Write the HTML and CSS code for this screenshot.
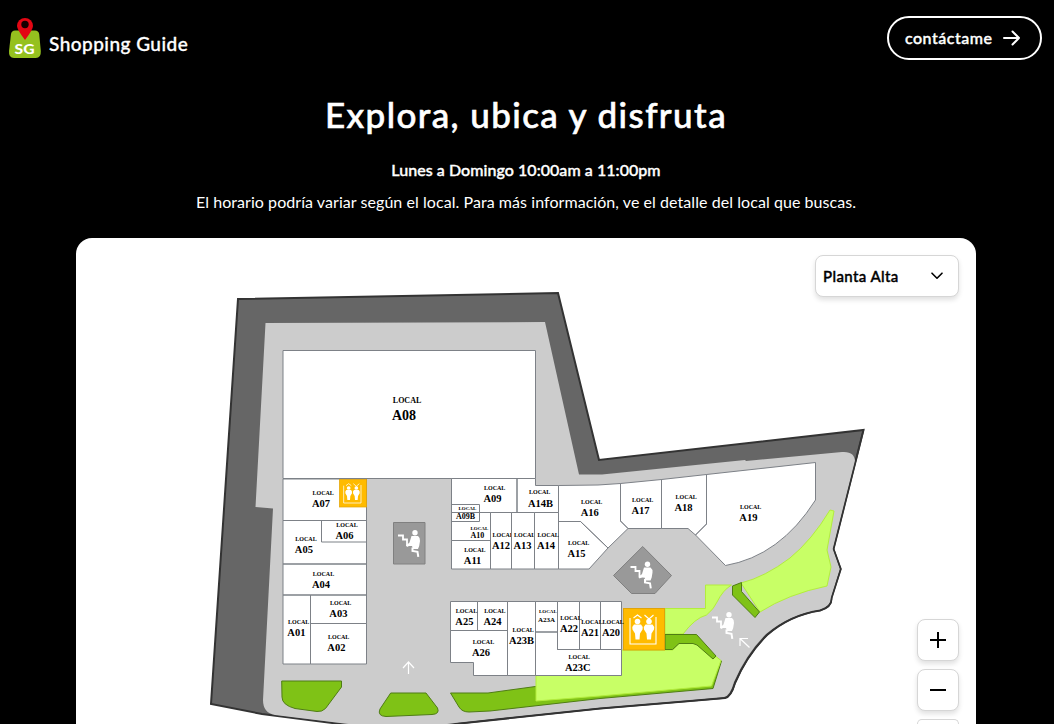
FILE: index.html
```html
<!DOCTYPE html>
<html lang="es">
<head>
<meta charset="utf-8">
<title>Shopping Guide</title>
<link rel="stylesheet" href="styles.css">
</head>
<body>
<header class="header">
  <a class="brand">
    <svg class="logo" width="34" height="42" viewBox="0 0 34 42">
      <path d="M7 13.500h20q3.500 0 4.200 3.500l1.600 17q.4 7-5 7H6q-5.500 0-5-7L3 17q.6-3.500 4-3.500z" fill="#95c11f"/>
      <path fill-rule="evenodd" d="M17 23Q9 12.500 9 9a8 8 0 0 1 16 0Q25 12.500 17 23z" fill="#e30613"/>
      <circle cx="17" cy="7.500" r="3.700" fill="#160000"/>
      <text x="6.500" y="36.500" class="logo-text" textLength="20" lengthAdjust="spacingAndGlyphs">SG</text>
    </svg>
    <span class="brand-name">Shopping Guide</span>
  </a>
  <a class="contact"><span>contáctame</span>
    <svg width="18" height="16" viewBox="0 0 18 16"><path d="M1 8h15M9.500 1.500 16 8l-6.500 6.500" class="icon-line"/></svg>
  </a>
</header>
<main class="main">
  <h1 class="title">Explora, ubica y disfruta</h1>
  <p class="hours">Lunes a Domingo 10:00am a 11:00pm</p>
  <p class="note">El horario podría variar según el local. Para más información, ve el detalle del local que buscas.</p>
  <section class="map-card">
    <svg class="map" width="900" height="486" viewBox="76 238 900 486">
      <defs>
        <g id="escalator">
          <path d="M0 5.500h5v4h4V15h5" fill="none" stroke="#fff" stroke-width="1.800"/>
          <circle cx="17" cy="2.800" r="2.700" fill="#fff"/>
          <path d="M13.500 6h6.500q2.200 1.500 2 5l-.8 5-1.200 3h-5l-1-3-2-.5-3 1.500-.8-1.500 3.300-3z" fill="#fff"/>
          <path d="M14.500 17.500v3.500l5 .8.800 5" fill="none" stroke="#fff" stroke-width="2"/>
        </g>
        <g id="elevator">
          <rect x=".5" y=".5" width="41" height="41.500" fill="#fb0" stroke="#e0a30a"/>
          <path d="M7 10v26h26V9M10.500 10l4-3 4 3M21.500 7l4.500 4 4.500-4" fill="none" stroke="#fff" stroke-width="1.100"/>
          <circle cx="14.500" cy="13.500" r="2.800" fill="#fff"/><circle cx="26" cy="13.500" r="2.800" fill="#fff"/>
          <path d="M11 16.500h7q2 1.500 1.500 5l-2.500 4-.5 6h-4l-.5-6-2.500-4q-.5-3.500 1.500-5zM22.500 16.500h7q2 1.500 1.500 5l-2.500 4-.5 6h-4l-.5-6-2.500-4q-.5-3.500 1.500-5z" fill="#fff"/>
        </g>
      </defs>

      <!-- building outline and walkways -->
      <path class="building" d="M238 299 558 293 599 460 863.500 430 833.500 549 840.700 569 831.500 598Q832 607 820 610.500 790 615 767 635 747 655 735 683 731 697 725 698L690 701 600 708.500 455 724 400 731 340 724 262 714 211 704z"/>
      <path class="floor" d="M265.500 323 545 322 579 474.500 602 474.500 745 460 746 461 842 452Q855 451 855 462L833 549 840 569 831 598Q831 606 820 609.500 790 614 766 634 746 654 734 682 730 696 724 697L690 700 600 707.500 455 723 400 730 340 723 275 715Q263 713 263 700L273 508.500 255.500 507z"/>
      <path class="edge" d="M863.500 430 833.500 549 840.700 569 831.500 598Q832 607 820 610.500 790 615 767 635 747 655 735 683 731 697 725 698L690 701 600 708.500 455 724"/>

      <!-- gardens -->
      <path class="garden" d="M281.700 681H341.500V687L325.500 708.500Q322 712 317 711.500L295 708.500Q282 705 282 697z"/>
      <path class="garden" d="M390.700 693H426L437.500 708Q440 714 432 714.500L386 716.500Q377 716 380 709z"/>
      <path class="garden" d="M450.500 693H488L535.500 686.500 721.500 661 713 688.500 600 698.500 490 711 469 712Q462 712 459 707z"/>
      <path class="lawn" d="M536 675.500H621.500V650H673L679 643.500H696.500L713 659 716 656.500 721 660.500 711.500 686 600 696 536 701z"/>
      <path class="lawn" d="M705.500 585H731.500Q723 590 717 602 714 609 706.500 615 695 618 683 634H665V608.500H705.500z"/>
      <path class="lawn" d="M830 510 834 511 827 550 831 567 827 586Q788 594 760 612L741 583Q765 577 790 558 812 540 830 510z"/>
      <path class="garden" d="M732.500 586 741.500 582.500V591.500L759.500 612 755 617.500 732.500 595z"/>
      <path class="garden" d="M665 634.500H696.500L716 656 713 659 697 645 693 643.500H679L672.500 649.500H665z"/>

      <!-- stores -->
      <g class="stores">
        <path d="M283 350.500H535.500V478.500H283zM283 479H366.500V520.500H283zM283 520.500H366.500V564H283zM321.500 520.500H366.500V542H321.500zM283 564H366.500V595H283zM283 595H310.500V664H283zM310.500 595H366.500V623.500H310.500zM310.500 623.500H366.500V664H310.500z"/>
        <path d="M451.500 478.500H517V512.500H451.500zM517 478.500H535.500V485.500H558.500V512.500H517zM451.500 512.500H490.500V540.500H451.500zM451.500 504.500H479.500V521.500H451.500zM451.500 540.500H490.500V569H451.500z"/>
        <path d="M558.500 521.500H580.500L608 548 589 569H558.500zM558.500 485.500 598 485 620.500 483.500V521L628 528.500 608 548 580.500 521.500H558.500zM620.500 483.500 661.500 479.500V528.500H628L620.500 521zM661.500 479.500 706.500 474.500V524L695.500 535 688 528.500H661.500zM706.500 474.500 815.500 462.500V500Q780 556 725.500 565.500L695.500 535 706.500 524z"/>
        <path d="M450.500 601.500H477.500V630.500H450.500zM477.500 601.500H507.500V630.500H477.500zM450.500 630.500H507.500V675.500H473.500V662.500H450.500zM507.500 601.500H535.500V675.500H507.500zM535.500 601.500H557.500V632H535.500zM557.500 601.500H579.500V649.500H557.500zM579.500 601.500H600.500V649.500H579.500zM600.500 601.500H621.500V649.500H600.500zM535.500 632H557.500V649.500H621.500V675.500H535.500z"/>
      </g>
      <g class="stores">
        <path d="M490.500 512.500H511.500V569H490.500z"/><text class="l" x="492.500" y="537">LOCAL</text>
        <path d="M511.500 512.500H534.500V569H511.500z"/><text class="l" x="514" y="537">LOCAL</text>
        <path d="M534.500 512.500H558.500V569H534.500z"/><text class="l" x="537.500" y="537">LOCAL</text>
      </g>

      <!-- services -->
      <use href="#elevator" transform="translate(339 479) scale(.667)"/>
      <use href="#elevator" x="623" y="608"/>
      <path class="hub" d="M393.500 522.500H425V564H393.500zM642.700 546.500 671.500 575.500 655 593.500H631.500L613.500 575.500z"/>
      <use href="#escalator" x="398" y="530"/><use href="#escalator" x="630.500" y="561.500"/><use href="#escalator" x="712" y="612"/>
      <path class="way" d="M408.500 674V662M403 668 408.500 662 414 668M749.500 647.500 740 638.500M740 646V638.500H748"/>

      <!-- store labels -->
      <text class="l big" x="392.800" y="403">LOCAL</text><text class="n big-n" x="392" y="420">A08</text>
      <text class="l" x="312.500" y="495">LOCAL</text><text class="n" x="312" y="507">A07</text>
      <text class="l" x="336.300" y="527">LOCAL</text><text class="n" x="335.500" y="539">A06</text>
      <text class="l" x="295.300" y="541">LOCAL</text><text class="n" x="294.800" y="553">A05</text>
      <text class="l" x="312.800" y="576">LOCAL</text><text class="n" x="312" y="588">A04</text>
      <text class="l" x="330" y="605">LOCAL</text><text class="n" x="329.300" y="617">A03</text>
      <text class="l" x="328" y="639">LOCAL</text><text class="n" x="327.300" y="651">A02</text>
      <text class="l" x="288" y="624">LOCAL</text><text class="n" x="287.300" y="636">A01</text>
      <text class="l" x="484" y="490">LOCAL</text><text class="n" x="483.500" y="502">A09</text>
      <text class="l" x="529" y="494">LOCAL</text><text class="n" x="528" y="506.500">A14B</text>
      <text class="l small" x="458.500" y="510">LOCAL</text><text class="n small-n" x="456" y="519">A09B</text>
      <text class="l small" x="470.500" y="529.500">LOCAL</text><text class="n small-n" x="470.500" y="538">A10</text>
      <text class="l" x="464.200" y="552">LOCAL</text><text class="n" x="463.800" y="564">A11</text>
      <text class="n" x="492" y="549">A12</text><text class="n" x="513.500" y="549">A13</text><text class="n" x="537" y="549">A14</text>
      <text class="l" x="581" y="504">LOCAL</text><text class="n" x="580.700" y="516">A16</text>
      <text class="l" x="568" y="545">LOCAL</text><text class="n" x="567.500" y="557">A15</text>
      <text class="l" x="632" y="502">LOCAL</text><text class="n" x="631.500" y="514">A17</text>
      <text class="l" x="675.500" y="499">LOCAL</text><text class="n" x="674.500" y="511">A18</text>
      <text class="l" x="740" y="509">LOCAL</text><text class="n" x="739.300" y="521">A19</text>
      <text class="l" x="455.800" y="613">LOCAL</text><text class="n" x="455.300" y="625">A25</text>
      <text class="l" x="484.200" y="613">LOCAL</text><text class="n" x="483.500" y="625">A24</text>
      <text class="l" x="472.800" y="644">LOCAL</text><text class="n" x="472" y="656">A26</text>
      <text class="l" x="512.500" y="632">LOCAL</text><text class="n" x="509" y="644">A23B</text>
      <text class="l small" x="539" y="613">LOCAL</text><text class="n tiny-n" x="538" y="622">A23A</text>
      <text class="l" x="560.300" y="620">LOCAL</text><text class="n" x="560" y="632">A22</text>
      <text class="l" x="581.300" y="624">LOCAL</text><text class="n" x="581" y="636">A21</text>
      <text class="l" x="602.500" y="624">LOCAL</text><text class="n" x="602" y="636">A20</text>
      <text class="l" x="568.500" y="659">LOCAL</text><text class="n" x="565" y="671">A23C</text>
    </svg>
    <div class="overlay">
      <button class="floor-select"><span>Planta Alta</span>
        <svg width="12" height="8" viewBox="0 0 12 8"><path d="M1 1.200 6 6.200 11 1.200" class="icon-line thin"/></svg>
      </button>
      <div class="zoom">
        <button class="zoom-btn"><svg width="16" height="16" viewBox="0 0 16 16"><path d="M0 8h16M8 0v16" class="icon-line square"/></svg></button>
        <button class="zoom-btn"><svg width="16" height="16" viewBox="0 0 16 16"><path d="M0 8h16" class="icon-line square"/></svg></button>
        <button class="zoom-btn last"></button>
      </div>
    </div>
  </section>
</main>
</body>
</html>
```
FILE: styles.css
```css
* { box-sizing: border-box; }
body { margin: 0; background: #000; color: #fff; font-family: Lato, "Open Sans", sans-serif; }
.header { display: flex; justify-content: space-between; align-items: flex-start; height: 76px; padding: 16px 12px 0 8px; }
.brand { display: flex; gap: 7px; padding-top: 1px; }
.logo { display: block; }
.logo-text { font: 900 14px Lato, sans-serif; fill: #fff; }
.brand-name { padding-top: 15px; font-size: 19px; line-height: 24px; font-weight: 500; letter-spacing: .47px; white-space: nowrap; -webkit-text-stroke: .3px; }
.contact { display: flex; align-items: center; gap: 11px; width: 155px; height: 44px; padding-left: 16px; border: 2px solid #fff; border-radius: 22px; font-size: 16px; font-weight: 500; }
.contact span { width: 87px; padding-bottom: 2px; letter-spacing: .5px; white-space: nowrap; -webkit-text-stroke: .4px; }
.icon-line { fill: none; stroke: currentColor; stroke-width: 2; stroke-linecap: round; stroke-linejoin: round; }
.icon-line.thin { stroke-width: 1.6; }
.icon-line.square { stroke-linecap: butt; }
.main { display: flex; flex-direction: column; align-items: center; padding-right: 2px; }
.title { margin: 18px 0 0; font-size: 35px; line-height: 40px; font-weight: 500; letter-spacing: 1.4px; white-space: nowrap; -webkit-text-stroke: .6px; }
.hours { margin: 24px 0 0; font-size: 16px; line-height: 24px; font-weight: 500; letter-spacing: .05px; white-space: nowrap; -webkit-text-stroke: .4px; }
.note { margin: 8px 0 0; font-size: 16px; line-height: 24px; letter-spacing: .06px; white-space: nowrap; }
.map-card { position: relative; width: 900px; height: 486px; margin: 24px 0 0; background: #fff; border-radius: 16px 16px 0 0; overflow: hidden; color: #000; }
.map { display: block; }
.overlay { position: absolute; top: 17px; right: 17px; display: flex; flex-direction: column; align-items: flex-end; gap: 322px; }
.floor-select, .zoom-btn { display: flex; align-items: center; background: #fff; color: #000; border: 1px solid #d6d6d6; border-radius: 8px; box-shadow: 0 3px 5px rgba(0, 0, 0, .12); }
.floor-select { justify-content: space-between; width: 144px; height: 42px; padding: 0 15px 0 7px; font: 500 15px Lato, sans-serif; letter-spacing: .4px; }
.floor-select span { padding-bottom: 1px; -webkit-text-stroke: .4px; }
.zoom { display: flex; flex-direction: column; gap: 8px; }
.zoom-btn { justify-content: center; width: 42px; height: 42px; padding: 0; }
.zoom-btn.last { height: 5px; border-bottom: 0; border-radius: 8px 8px 0 0; box-shadow: none; }
.building { fill: #666; stroke: #333; stroke-width: 2; }
.floor { fill: #ccc; }
.edge { fill: none; stroke: #333; stroke-width: 1.5; }
.garden { fill: #7fc216; stroke: #4f7d14; stroke-width: 1; }
.lawn { fill: #c8ff66; stroke: #b3ed3d; stroke-width: 1; }
.stores path { fill: #fff; stroke: #7d8187; stroke-width: 1; }
.hub { fill: #999; stroke: #808080; }
.way { fill: none; stroke: #fff; stroke-width: 1.2; }
.l, .n { font-family: "Liberation Serif", serif; font-weight: 700; fill: #000; }
.l { font-size: 6px; }
.n { font-size: 10.5px; }
.big { font-size: 8px; }
.big-n { font-size: 14px; }
.small { font-size: 5px; }
.small-n { font-size: 8px; }
.tiny-n { font-size: 7px; }
```
